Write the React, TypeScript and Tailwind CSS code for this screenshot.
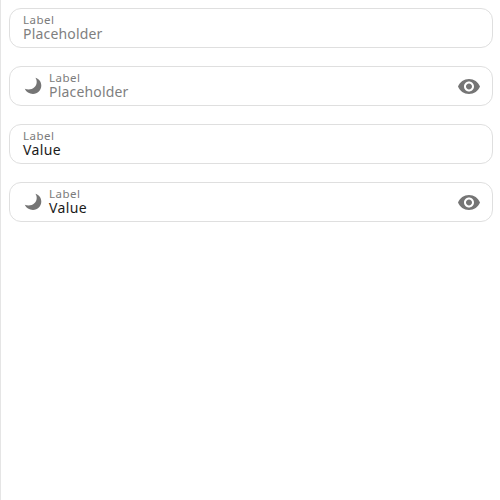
const Moon = () => (
  <svg viewBox="0 0 22 22" className="mr-1 h-[22px] w-[22px] shrink-0 fill-[#757575]">
    <path d="M12.4 2.8C16.2 4 18.3 7 18.3 10.6C18.3 15.2 14.6 18.9 10 18.9C6.3 18.9 3.1 17 1.8 13.8C3 14.3 4.2 14.5 5.5 14.5C10.2 14.5 13.7 11.2 13.7 7C13.7 5.4 13.3 4.1 12.4 2.8Z" />
  </svg>
);

const Eye = () => (
  <svg viewBox="0 -0.5 24 24" className="h-6 w-6 shrink-0 fill-[#757575]">
    <path d="M12 4.5C7 4.5 2.73 7.61 1 12c1.73 4.39 6 7.5 11 7.5s9.27-3.11 11-7.5c-1.73-4.39-6-7.5-11-7.5zM12 17c-2.76 0-5-2.24-5-5s2.24-5 5-5 5 2.24 5 5-2.24 5-5 5zm0-8c-1.66 0-3 1.34-3 3s1.34 3 3 3 3-1.34 3-3-1.34-3-3-3z" />
  </svg>
);

function Field({ value, icons }: { value?: string; icons?: boolean }) {
  return (
    <div className="flex h-10 items-center rounded-[12px] border border-[#dfdfdf] bg-white pl-[13px] pr-[11px]">
      {icons && <Moon />}
      <div className="flex min-w-0 flex-1 flex-col pb-[3px]">
        <div className="h-[14px] text-[11.5px] leading-[13px] tracking-[0.5px] text-[#7b7b7b]">Label</div>
        <div className={value ? "h-[14px] text-[14px] leading-[14px] tracking-[0.4px] text-[#1a1a1a]" : "h-[14px] text-[14px] leading-[14px] tracking-[0.18px] text-[#7f7f7f]"}>
          {value ?? "Placeholder"}
        </div>
      </div>
      {icons && <Eye />}
    </div>
  );
}

export default function App() {
  return (
    <main className="flex h-[500px] w-[500px] flex-col gap-[18px] border-l border-[#e5e5e5] bg-white pl-2 pr-[7px] pt-2 font-['Noto_Sans',sans-serif]">
      <Field />
      <Field icons />
      <Field value="Value" />
      <Field value="Value" icons />
    </main>
  );
}
